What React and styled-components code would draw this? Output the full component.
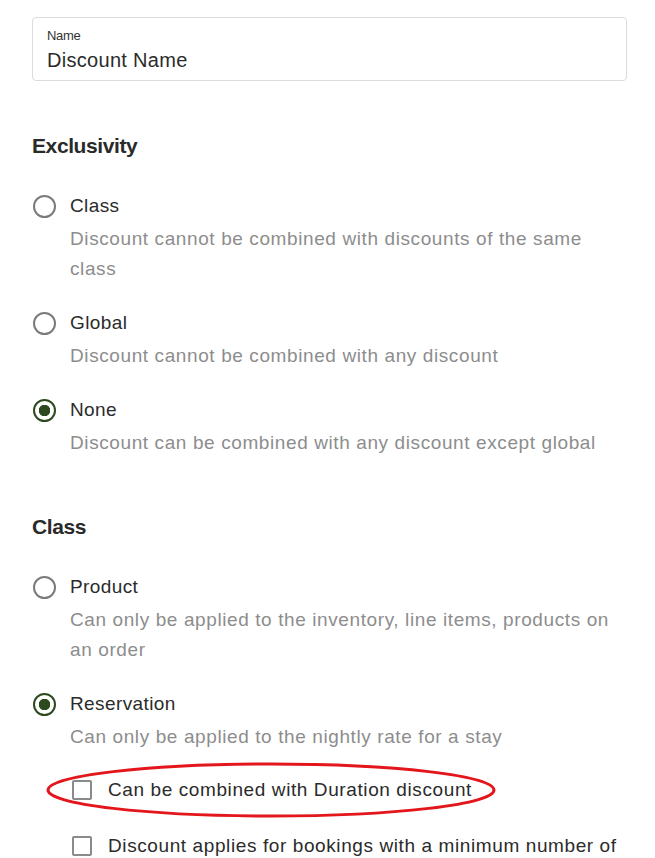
import React from "react";
import styled, { createGlobalStyle } from "styled-components";

const GlobalStyle = createGlobalStyle`
  body {
    margin: 0;
    background: #ffffff;
    font-family: "Liberation Sans", Arial, sans-serif;
    color: #2b2b2b;
  }
`;

const exclusivity = [
  {
    id: "class",
    label: "Class",
    text: "Discount cannot be combined with discounts of the same class",
  },
  {
    id: "global",
    label: "Global",
    text: "Discount cannot be combined with any discount",
  },
  {
    id: "none",
    label: "None",
    text: "Discount can be combined with any discount except global",
  },
];

const classes = [
  {
    id: "product",
    label: "Product",
    text: "Can only be applied to the inventory, line items, products on an order",
  },
  {
    id: "reservation",
    label: "Reservation",
    text: "Can only be applied to the nightly rate for a stay",
  },
];

export default function App() {
  return (
    <Page>
      <GlobalStyle />
      <Field>
        <FieldLabel>Name</FieldLabel>
        <FieldValue>Discount Name</FieldValue>
      </Field>

      <Heading>Exclusivity</Heading>
      <Options>
        {exclusivity.map((o) => (
          <Option key={o.id}>
            <Radio checked={o.id === "none"} />
            <OptionBody>
              <OptionLabel>{o.label}</OptionLabel>
              <OptionText>{o.text}</OptionText>
            </OptionBody>
          </Option>
        ))}
      </Options>

      <Heading $top={54}>Class</Heading>
      <Options>
        {classes.map((o) => (
          <Option key={o.id}>
            <Radio checked={o.id === "reservation"} />
            <OptionBody>
              <OptionLabel>{o.label}</OptionLabel>
              <OptionText>{o.text}</OptionText>
            </OptionBody>
          </Option>
        ))}
      </Options>

      <Checks>
        <CheckRow>
          <Box />
          <CheckLabel>Can be combined with Duration discount</CheckLabel>
          <Circled viewBox="0 0 452 58">
            <ellipse
              cx="226"
              cy="29"
              rx="223"
              ry="26"
              fill="none"
              stroke="#e3161c"
              strokeWidth="3"
            />
          </Circled>
        </CheckRow>
        <CheckRow>
          <Box />
          <CheckLabel>
            Discount applies for bookings with a minimum number of nights
          </CheckLabel>
        </CheckRow>
      </Checks>
    </Page>
  );
}

const Page = styled.div`
  width: 595px;
  padding: 17px 0 0 32px;
  height: 841px;
  overflow: hidden;
`;

const Field = styled.div`
  box-sizing: border-box;
  height: 64px;
  border: 1px solid #dcdcdc;
  border-radius: 4px;
  padding: 10px 14px 0;
  display: flex;
  flex-direction: column;
`;

const FieldLabel = styled.div`
  font-size: 13px;
  line-height: 16px;
  color: #333;
  letter-spacing: -0.3px;
`;

const FieldValue = styled.div`
  margin-top: 2px;
  font-size: 20px;
  line-height: 28px;
  color: #2b2b2b;
  letter-spacing: 0.3px;
`;

const Heading = styled.h2`
  margin: ${(p) => p.$top ?? 50}px 0 30px;
  font-size: 21px;
  line-height: 30px;
  font-weight: 700;
  color: #2a2a2a;
  letter-spacing: -0.4px;
`;

const Options = styled.div`
  display: flex;
  flex-direction: column;
  gap: 24px;
`;

const Option = styled.div`
  display: flex;
  gap: 14px;
`;

const Radio = styled.span`
  flex: none;
  box-sizing: border-box;
  width: 23px;
  height: 23px;
  margin: 4px 0 0 1px;
  border-radius: 50%;
  border: 2px solid ${(p) => (p.checked ? "#2d4a1f" : "#7a7a7a")};
  background: ${(p) =>
    p.checked
      ? "radial-gradient(circle, #2d4a1f 0 5.5px, #fff 6px)"
      : "#fff"};
`;

const OptionBody = styled.div`
  display: flex;
  flex-direction: column;
  gap: 3px;
`;

const OptionLabel = styled.div`
  font-size: 19px;
  line-height: 30px;
  color: #2b2b2b;
  letter-spacing: 0.4px;
`;

const OptionText = styled.div`
  font-size: 19px;
  line-height: 30px;
  color: #8d8d8d;
  letter-spacing: 0.6px;
  max-width: 548px;
`;

const Checks = styled.div`
  margin: 23px 0 0 40px;
  display: flex;
  flex-direction: column;
  gap: 26px;
`;

const CheckRow = styled.div`
  position: relative;
  display: flex;
  align-items: flex-start;
  gap: 16px;
`;

const Box = styled.span`
  flex: none;
  box-sizing: border-box;
  width: 20px;
  height: 20px;
  margin-top: 5px;
  border: 2px solid #8a8a8a;
  border-radius: 2px;
`;

const CheckLabel = styled.span`
  font-size: 19px;
  line-height: 30px;
  color: #2b2b2b;
  letter-spacing: 0.6px;
  max-width: 520px;
`;

const Circled = styled.svg`
  position: absolute;
  left: -27px;
  top: -14px;
  width: 452px;
  height: 58px;
  pointer-events: none;
`;
